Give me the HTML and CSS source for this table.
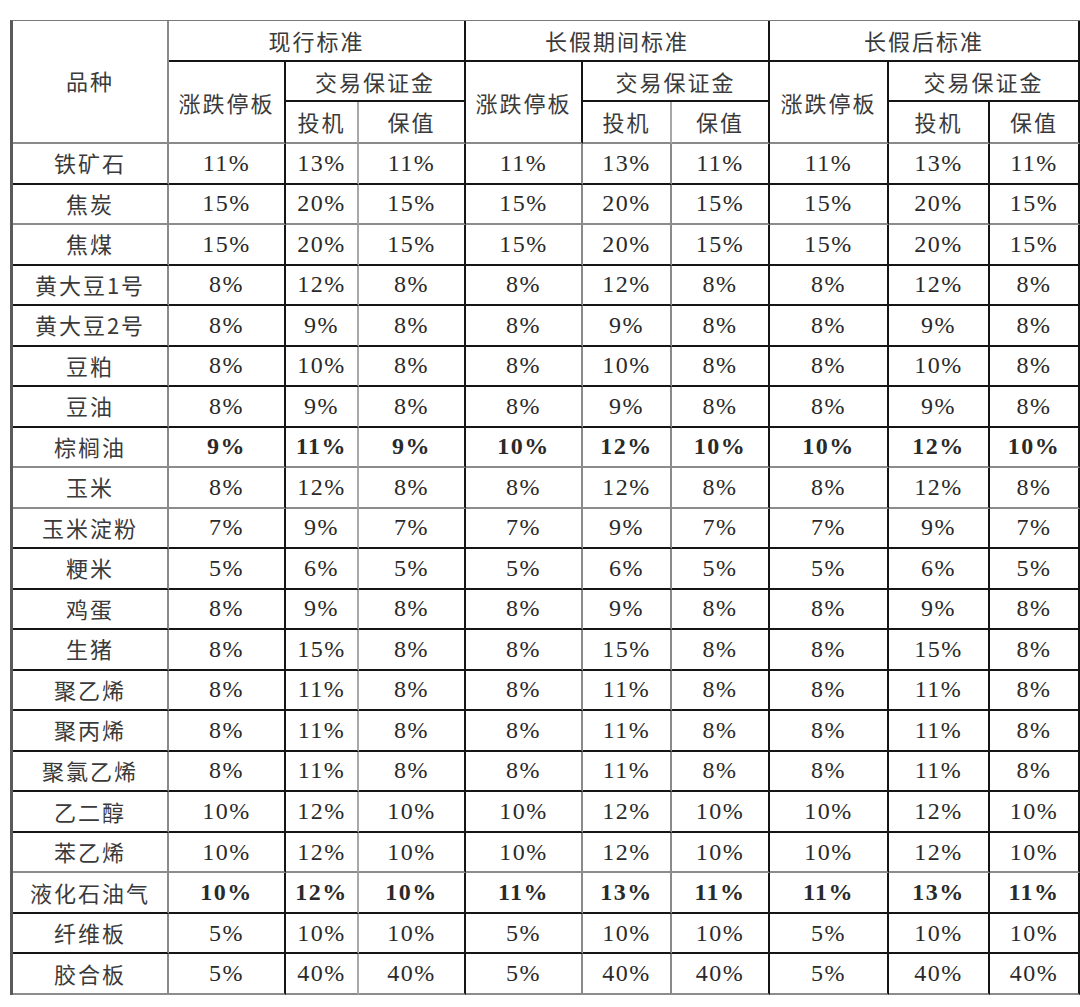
FILE: index.html
```html
<!DOCTYPE html>
<html lang="zh">
<head>
<meta charset="utf-8">
<title>保证金标准</title>
<link rel="stylesheet" href="styles.css">
</head>
<body>
<table class="grid">
  <colgroup>
    <col class="c-name"><col class="c-lim"><col class="c-spec"><col class="c-hedge">
    <col class="c-lim"><col class="c-spec2"><col class="c-hedge2">
    <col class="c-lim3"><col class="c-spec3"><col class="c-hedge3">
  </colgroup>
  <thead>
    <tr class="h1">
      <th rowspan="3" class="name g">品种</th>
      <th colspan="3">现行标准</th>
      <th colspan="3">长假期间标准</th>
      <th colspan="3">长假后标准</th>
    </tr>
    <tr class="h2">
      <th rowspan="2" class="lb">涨跌停板</th>
      <th colspan="2">交易保证金</th>
      <th rowspan="2" class="lb">涨跌停板</th>
      <th colspan="2">交易保证金</th>
      <th rowspan="2" class="lb">涨跌停板</th>
      <th colspan="2">交易保证金</th>
    </tr>
    <tr class="h3">
      <th class="gl gb">投机</th><th class="gb">保值</th>
      <th class="gl gb">投机</th><th class="gb">保值</th>
      <th class="gb">投机</th><th class="gb">保值</th>
    </tr>
  </thead>
  <tbody>
    <tr><td class="name g">铁矿石</td><td>11%</td><td class="gl">13%</td><td>11%</td><td class="g">11%</td><td class="g">13%</td><td>11%</td><td>11%</td><td>13%</td><td>11%</td></tr>
    <tr class="gr"><td class="name g">焦炭</td><td>15%</td><td class="gl">20%</td><td>15%</td><td class="g">15%</td><td class="g">20%</td><td>15%</td><td>15%</td><td>20%</td><td>15%</td></tr>
    <tr><td class="name g">焦煤</td><td>15%</td><td class="gl">20%</td><td>15%</td><td class="g">15%</td><td class="g">20%</td><td>15%</td><td>15%</td><td>20%</td><td>15%</td></tr>
    <tr><td class="name g">黄大豆1号</td><td>8%</td><td class="gl">12%</td><td>8%</td><td class="g">8%</td><td class="g">12%</td><td>8%</td><td>8%</td><td>12%</td><td>8%</td></tr>
    <tr><td class="name g">黄大豆2号</td><td>8%</td><td class="gl">9%</td><td>8%</td><td class="g">8%</td><td class="g">9%</td><td>8%</td><td>8%</td><td>9%</td><td>8%</td></tr>
    <tr><td class="name g">豆粕</td><td>8%</td><td class="gl">10%</td><td>8%</td><td class="g">8%</td><td class="g">10%</td><td>8%</td><td>8%</td><td>10%</td><td>8%</td></tr>
    <tr><td class="name g">豆油</td><td>8%</td><td class="gl">9%</td><td>8%</td><td class="g">8%</td><td class="g">9%</td><td>8%</td><td>8%</td><td>9%</td><td>8%</td></tr>
    <tr class="bold gr"><td class="name g">棕榈油</td><td>9%</td><td class="gl">11%</td><td>9%</td><td class="g">10%</td><td class="g">12%</td><td>10%</td><td>10%</td><td>12%</td><td>10%</td></tr>
    <tr class="gr"><td class="name g">玉米</td><td>8%</td><td class="gl">12%</td><td>8%</td><td class="g">8%</td><td class="g">12%</td><td>8%</td><td>8%</td><td>12%</td><td>8%</td></tr>
    <tr><td class="name g">玉米淀粉</td><td>7%</td><td class="gl">9%</td><td>7%</td><td class="g">7%</td><td class="g">9%</td><td>7%</td><td>7%</td><td>9%</td><td>7%</td></tr>
    <tr><td class="name g">粳米</td><td>5%</td><td class="gl">6%</td><td>5%</td><td class="g">5%</td><td class="g">6%</td><td>5%</td><td>5%</td><td>6%</td><td>5%</td></tr>
    <tr><td class="name g">鸡蛋</td><td>8%</td><td class="gl">9%</td><td>8%</td><td class="g">8%</td><td class="g">9%</td><td>8%</td><td>8%</td><td>9%</td><td>8%</td></tr>
    <tr><td class="name g">生猪</td><td>8%</td><td class="gl">15%</td><td>8%</td><td class="g">8%</td><td class="g">15%</td><td>8%</td><td>8%</td><td>15%</td><td>8%</td></tr>
    <tr><td class="name g">聚乙烯</td><td>8%</td><td class="gl">11%</td><td>8%</td><td class="g">8%</td><td class="g">11%</td><td>8%</td><td>8%</td><td>11%</td><td>8%</td></tr>
    <tr><td class="name g">聚丙烯</td><td>8%</td><td class="gl">11%</td><td>8%</td><td class="g">8%</td><td class="g">11%</td><td>8%</td><td>8%</td><td>11%</td><td>8%</td></tr>
    <tr><td class="name g">聚氯乙烯</td><td>8%</td><td class="gl">11%</td><td>8%</td><td class="g">8%</td><td class="g">11%</td><td>8%</td><td>8%</td><td>11%</td><td>8%</td></tr>
    <tr><td class="name g">乙二醇</td><td>10%</td><td class="gl">12%</td><td>10%</td><td class="g">10%</td><td class="g">12%</td><td>10%</td><td>10%</td><td>12%</td><td>10%</td></tr>
    <tr class="gr"><td class="name g">苯乙烯</td><td>10%</td><td class="gl">12%</td><td>10%</td><td class="g">10%</td><td class="g">12%</td><td>10%</td><td>10%</td><td>12%</td><td>10%</td></tr>
    <tr class="bold"><td class="name g">液化石油气</td><td>10%</td><td class="gl">12%</td><td>10%</td><td class="g">11%</td><td class="g">13%</td><td>11%</td><td>11%</td><td>13%</td><td>11%</td></tr>
    <tr><td class="name g">纤维板</td><td>5%</td><td class="gl">10%</td><td>10%</td><td class="g">5%</td><td class="g">10%</td><td>10%</td><td>5%</td><td>10%</td><td>10%</td></tr>
    <tr class="gr"><td class="name g">胶合板</td><td>5%</td><td class="gl">40%</td><td>40%</td><td class="g">5%</td><td class="g">40%</td><td>40%</td><td>5%</td><td>40%</td><td>40%</td></tr>
  </tbody>
</table>
</body>
</html>
```
FILE: styles.css
```css
html, body {
  margin: 0;
  padding: 0;
  background: #fff;
}

.grid {
  margin: 20px 0 0 10px;
  border-collapse: separate;
  border-spacing: 0;
  table-layout: fixed;
  width: 1070px;
  border-top: 1px solid #7a7a7a;
  border-left: 3px solid #5a5a5a;
  color: #2a2a2a;
}

.c-name { width: 156px; }
.c-lim { width: 117px; }
.c-spec { width: 73px; }
.c-hedge { width: 107px; }
.c-spec2 { width: 89px; }
.c-hedge2 { width: 98px; }
.c-lim3 { width: 119px; }
.c-spec3 { width: 101px; }
.c-hedge3 { width: 90px; }

.grid th,
.grid td {
  padding: 0;
  text-align: center;
  vertical-align: middle;
  border-right: 2px solid #151515;
  border-bottom: 2px solid #151515;
  white-space: nowrap;
  overflow: hidden;
}

.grid th {
  font-family: "Noto Sans CJK SC", sans-serif;
  font-weight: 400;
  font-size: 22px;
  letter-spacing: 2px;
  color: #3a3a3a;
}

.grid td {
  font-family: "Liberation Serif", serif;
  font-size: 24px;
  letter-spacing: 1.5px;
}

.grid td.name {
  font-family: "Noto Sans CJK SC", sans-serif;
  font-size: 22px;
  letter-spacing: 2px;
  color: #3a3a3a;
  font-weight: 400;
}

.h1 { height: 41px; }
.h2 { height: 40px; }
.h3 { height: 42px; }
.h1 th { padding-bottom: 2px; }
.h3 th { padding-bottom: 2px; }
.h1 th.name { padding-bottom: 4px; }

.grid tbody tr { height: 40.52px; }
.grid td.name { padding-bottom: 2px; }

.grid th.g,
.grid td.g { border-right-color: #8a8a8a; }
.grid td.gl,
.grid th.gl { border-right-color: #a8a8a8; }
.grid th.gb,
.grid th.lb,
.grid th.name { border-bottom-color: #8a8a8a; }

.grid tr.gr td { border-bottom-color: #8c8c8c; }

.grid tr.bold td:not(.name) { font-weight: 700; }
```
